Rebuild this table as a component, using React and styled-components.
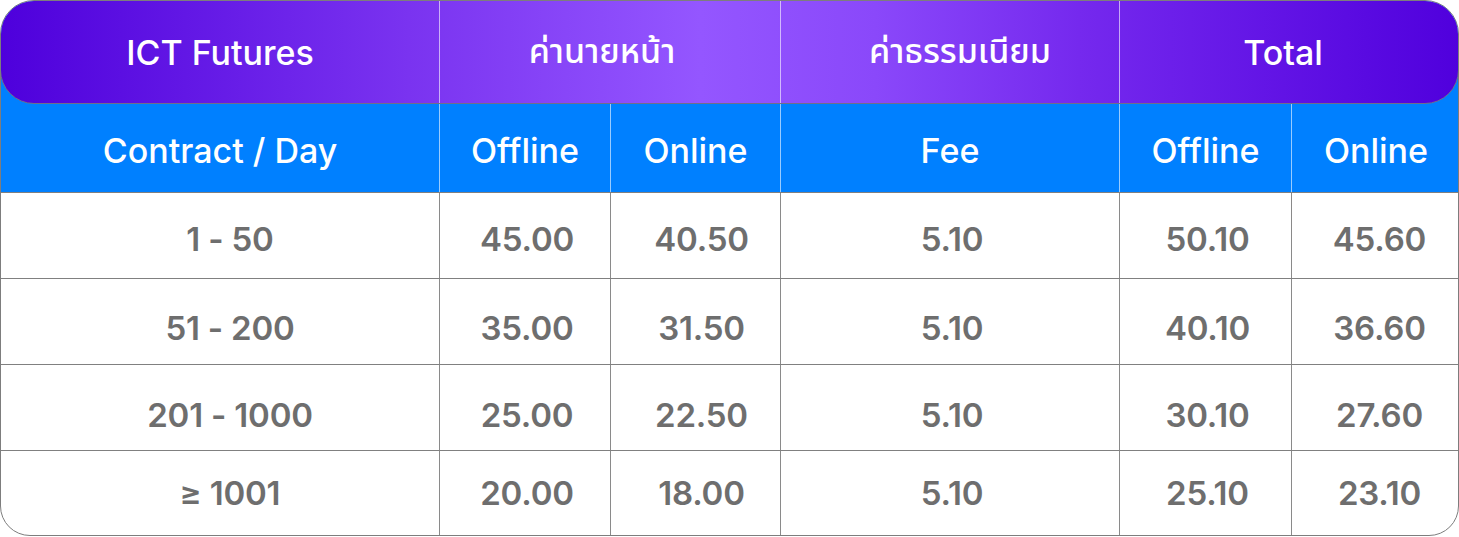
import React from 'react'
import styled, { createGlobalStyle } from 'styled-components'

const GlobalStyle = createGlobalStyle`
  html, body {
    margin: 0;
    padding: 0;
    background: #ffffff;
  }
  body {
    font-family: Inter, "Noto Sans Thai", "Noto Sans", "DejaVu Sans", sans-serif;
  }
`

const COLS = '438px 171px 170px 339px 172px 169px'

const Table = styled.div`
  width: 1459px;
  box-sizing: border-box;
  border: 1px solid #7d7d7d;
  border-radius: 34px 34px 30px 30px;
  overflow: hidden;
  background: #ffffff;
`

const Head = styled.div`
  background: #0080ff;
`

const TitleBar = styled.div`
  display: grid;
  grid-template-columns: 438px 341px 339px 1fr;
  height: 102px;
  margin: -1px -1px 0;
  border: 1px solid #6f6f8a;
  border-radius: 34px;
  background: linear-gradient(
    90deg,
    #4e00dc 0%,
    #7a33f0 28%,
    #9456ff 48%,
    #8a48fa 60%,
    #7529ee 74%,
    #5000dd 100%
  );
`

const TitleCell = styled.div`
  display: flex;
  align-items: center;
  justify-content: center;
  color: #ffffff;
  font-size: 34px;
  font-weight: 500;
  padding-left: ${(p) => Math.max(p.$shift || 0, 0)}px;
  padding-right: ${(p) => Math.max(-(p.$shift || 0), 0)}px;
  border-left: ${(p) => (p.$first ? 'none' : '1px solid rgba(255, 255, 255, 0.6)')};
`

const SubRow = styled.div`
  display: grid;
  grid-template-columns: ${COLS};
  height: 88px;
  border-bottom: 1px solid #808080;
`

const SubCell = styled.div`
  display: flex;
  align-items: center;
  justify-content: center;
  color: #ffffff;
  font-size: 34px;
  font-weight: 500;
  padding-top: 5px;
  border-left: ${(p) => (p.$first ? 'none' : '1px solid rgba(255, 255, 255, 0.6)')};
`

const Row = styled.div`
  display: grid;
  grid-template-columns: ${COLS};
  height: ${(p) => p.$h}px;
  border-bottom: ${(p) => (p.$last ? 'none' : '1px solid #808080')};
`

const Cell = styled.div`
  display: flex;
  align-items: center;
  justify-content: center;
  color: #6e6e6e;
  font-size: 33px;
  font-weight: 600;
  letter-spacing: -0.2px;
  padding-top: ${(p) => p.$pad}px;
  padding-left: ${(p) => p.$shift || 0}px;
  border-left: ${(p) => (p.$first ? 'none' : '1px solid #8a8a8a')};
`

const shifts = [20, 4, 12, 4, 4, 7]

const rows = [
  { pad: 6, cells: ['1 - 50', '45.00', '40.50', '5.10', '50.10', '45.60'] },
  { pad: 12, cells: ['51 - 200', '35.00', '31.50', '5.10', '40.10', '36.60'] },
  { pad: 14, cells: ['201 - 1000', '25.00', '22.50', '5.10', '30.10', '27.60'] },
  { pad: 0, cells: ['≥ 1001', '20.00', '18.00', '5.10', '25.10', '23.10'] },
]

export default function App() {
  return (
    <>
      <GlobalStyle />
      <Table>
        <Head>
          <TitleBar>
            <TitleCell $first>ICT Futures</TitleCell>
            <TitleCell $shift={-16}>ค่านายหน้า</TitleCell>
            <TitleCell $shift={20}>ค่าธรรมเนียม</TitleCell>
            <TitleCell $shift={-12}>Total</TitleCell>
          </TitleBar>
          <SubRow>
            <SubCell $first>Contract / Day</SubCell>
            <SubCell>Offline</SubCell>
            <SubCell>Online</SubCell>
            <SubCell>Fee</SubCell>
            <SubCell>Offline</SubCell>
            <SubCell>Online</SubCell>
          </SubRow>
        </Head>
        {rows.map((r, i) => (
          <Row key={i} $h={i === 3 ? 84 : 85} $last={i === 3}>
            {r.cells.map((v, j) => (
              <Cell key={j} $first={j === 0} $shift={shifts[j]} $pad={r.pad}>
                {v}
              </Cell>
            ))}
          </Row>
        ))}
      </Table>
    </>
  )
}
